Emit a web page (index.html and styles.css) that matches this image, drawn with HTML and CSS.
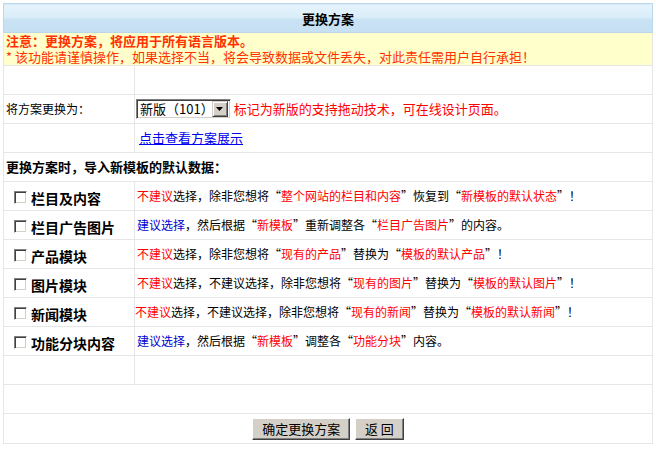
FILE: index.html
```html
<!DOCTYPE html>
<html lang="zh-CN">
<head>
<meta charset="utf-8">
<title>更换方案</title>
<link rel="stylesheet" href="styles.css">
</head>
<body>
<table class="panel">
  <colgroup><col class="c1"><col class="c2"></colgroup>
  <tr><th colspan="2" class="head">更换方案</th></tr>
  <tr>
    <td colspan="2" class="notice">
      <div class="n1">注意：更换方案，将应用于所有语言版本。</div>
      <div class="n2">* 该功能请谨慎操作，如果选择不当，将会导致数据或文件丢失，对此责任需用户自行承担！</div>
    </td>
  </tr>
  <tr class="row"><td></td><td></td></tr>
  <tr class="row">
    <td>将方案更换为：</td>
    <td class="selcell">
      <span class="sel"><span class="sel-text">新版（101）</span><span class="sel-btn"><svg width="8" height="5" viewBox="0 0 8 5"><path d="M0 0H7L3.5 4Z" fill="#000"/></svg></span></span>
      <span class="mark">标记为新版的支持拖动技术，可在线设计页面。</span>
    </td>
  </tr>
  <tr class="row"><td></td><td><a class="link" href="#">点击查看方案展示</a></td></tr>
  <tr class="row"><td colspan="2" class="sub">更换方案时，导入新模板的默认数据：</td></tr>
  <tr class="row">
    <td class="opt"><input type="checkbox" class="chk"><span>栏目及内容</span></td>
    <td><span class="r">不建议</span>选择，除非您想将“<span class="r">整个网站的栏目和内容</span>”恢复到“<span class="r">新模板的默认状态</span>”！</td>
  </tr>
  <tr class="row">
    <td class="opt"><input type="checkbox" class="chk"><span>栏目广告图片</span></td>
    <td><span class="b">建议选择</span>，然后根据“<span class="r">新模板</span>”重新调整各“<span class="r">栏目广告图片</span>”的内容。</td>
  </tr>
  <tr class="row">
    <td class="opt"><input type="checkbox" class="chk"><span>产品模块</span></td>
    <td><span class="r">不建议</span>选择，除非您想将“<span class="r">现有的产品</span>”替换为“<span class="r">模板的默认产品</span>”！</td>
  </tr>
  <tr class="row">
    <td class="opt"><input type="checkbox" class="chk"><span>图片模块</span></td>
    <td><span class="r">不建议</span>选择，不建议选择，除非您想将“<span class="r">现有的图片</span>”替换为“<span class="r">模板的默认图片</span>”！</td>
  </tr>
  <tr class="row">
    <td class="opt"><input type="checkbox" class="chk"><span>新闻模块</span></td>
    <td class="tight"><span class="r">不建议</span>选择，不建议选择，除非您想将“<span class="r">现有的新闻</span>”替换为“<span class="r">模板的默认新闻</span>”！</td>
  </tr>
  <tr class="row">
    <td class="opt"><input type="checkbox" class="chk"><span>功能分块内容</span></td>
    <td><span class="b">建议选择</span>，然后根据“<span class="r">新模板</span>”调整各“<span class="r">功能分块</span>”内容。</td>
  </tr>
  <tr class="row"><td></td><td></td></tr>
  <tr class="row"><td colspan="2"></td></tr>
  <tr class="row">
    <td colspan="2" class="actions">
      <button class="btn" type="button">确定更换方案</button>
      <button class="btn" type="button">返 回</button>
    </td>
  </tr>
</table>
</body>
</html>
```

FILE: styles.css
```css
html, body {
  margin: 0;
  background: #fff;
}
body {
  padding: 3px 0 0 3px;
  font-family: "Noto Sans CJK SC", "Liberation Sans", sans-serif;
  font-size: 12px;
  color: #000;
}
.panel {
  border-collapse: collapse;
  width: 650px;
  border: 1px solid #e3e3e3;
}
.c1 { width: 131px; }
.panel td {
  border: 1px solid #e6e6e6;
  padding: 0 2px;
  vertical-align: middle;
  line-height: 16px;
}
.head {
  height: 28px;
  padding: 0;
  border: 1px solid #bcd6ea;
  background: linear-gradient(#e6f3fc 0%, #d9edf9 48%, #c9e2f4 50%, #c6e0f3 100%);
  font-size: 13px;
  font-weight: bold;
  text-align: center;
}
.panel td.notice {
  height: 32px;
  background: #ffffcc;
  color: #ff3300;
  font-size: 13px;
  padding: 0 2px;
}
.n1 { font-weight: bold; line-height: 16px; height: 16px; }
.n2 { line-height: 16px; height: 16px; }
.row td { height: 28px; }
.panel td.selcell { padding-left: 1px; }
.sel {
  display: inline-flex;
  align-items: center;
  justify-content: space-between;
  vertical-align: middle;
  box-sizing: border-box;
  width: 95px;
  height: 20px;
  background: #fff;
  border-top: 1px solid #808080;
  border-left: 1px solid #808080;
  border-right: 1px solid #fff;
  border-bottom: 1px solid #fff;
  box-shadow: inset 1px 1px 0 #404040, inset -1px -1px 0 #d4d0c8;
  padding: 2px 2px 2px 3px;
}
.sel-text { font-size: 13px; line-height: 14px; }
.sel-btn {
  display: flex;
  align-items: center;
  justify-content: center;
  box-sizing: border-box;
  width: 16px;
  height: 16px;
  background: #d4d0c8;
  border-top: 1px solid #d4d0c8;
  border-left: 1px solid #d4d0c8;
  border-right: 1px solid #404040;
  border-bottom: 1px solid #404040;
  box-shadow: inset 1px 1px 0 #fff, inset -1px -1px 0 #808080;
}
.mark {
  color: #ff0000;
  font-size: 13px;
  vertical-align: middle;
}
.link {
  color: #0000ee;
  font-size: 13px;
  text-decoration: underline;
  margin-left: 2px;
}
.panel td.sub {
  font-size: 13px;
  font-weight: bold;
}
.panel td.opt {
  padding-left: 10px;
  font-size: 14px;
  font-weight: bold;
}
.opt span { vertical-align: middle; position: relative; top: 1px; }
.chk {
  appearance: none;
  -webkit-appearance: none;
  box-sizing: border-box;
  width: 13px;
  height: 13px;
  margin: 0 4px 0 0;
  vertical-align: middle;
  background: #fff;
  border-top: 1px solid #808080;
  border-left: 1px solid #808080;
  border-right: 1px solid #fff;
  border-bottom: 1px solid #fff;
  box-shadow: inset 1px 1px 0 #404040, inset -1px -1px 0 #d4d0c8;
}
.panel td.tight { padding-left: 0; }
.r { color: #ff0000; }
.b { color: #0000cc; }
.panel td.actions { text-align: center; padding-top: 1px; }
.btn {
  font-family: "Noto Sans CJK SC", "Liberation Sans", sans-serif;
  font-size: 13px;
  line-height: 16px;
  height: 22px;
  padding: 0 9px;
  margin: 0 1px;
  background: #d4d0c8;
  color: #000;
  border-top: 1px solid #fff;
  border-left: 1px solid #fff;
  border-right: 1px solid #404040;
  border-bottom: 1px solid #404040;
  box-shadow: inset -1px -1px 0 #808080;
  border-radius: 0;
  vertical-align: middle;
}
```
